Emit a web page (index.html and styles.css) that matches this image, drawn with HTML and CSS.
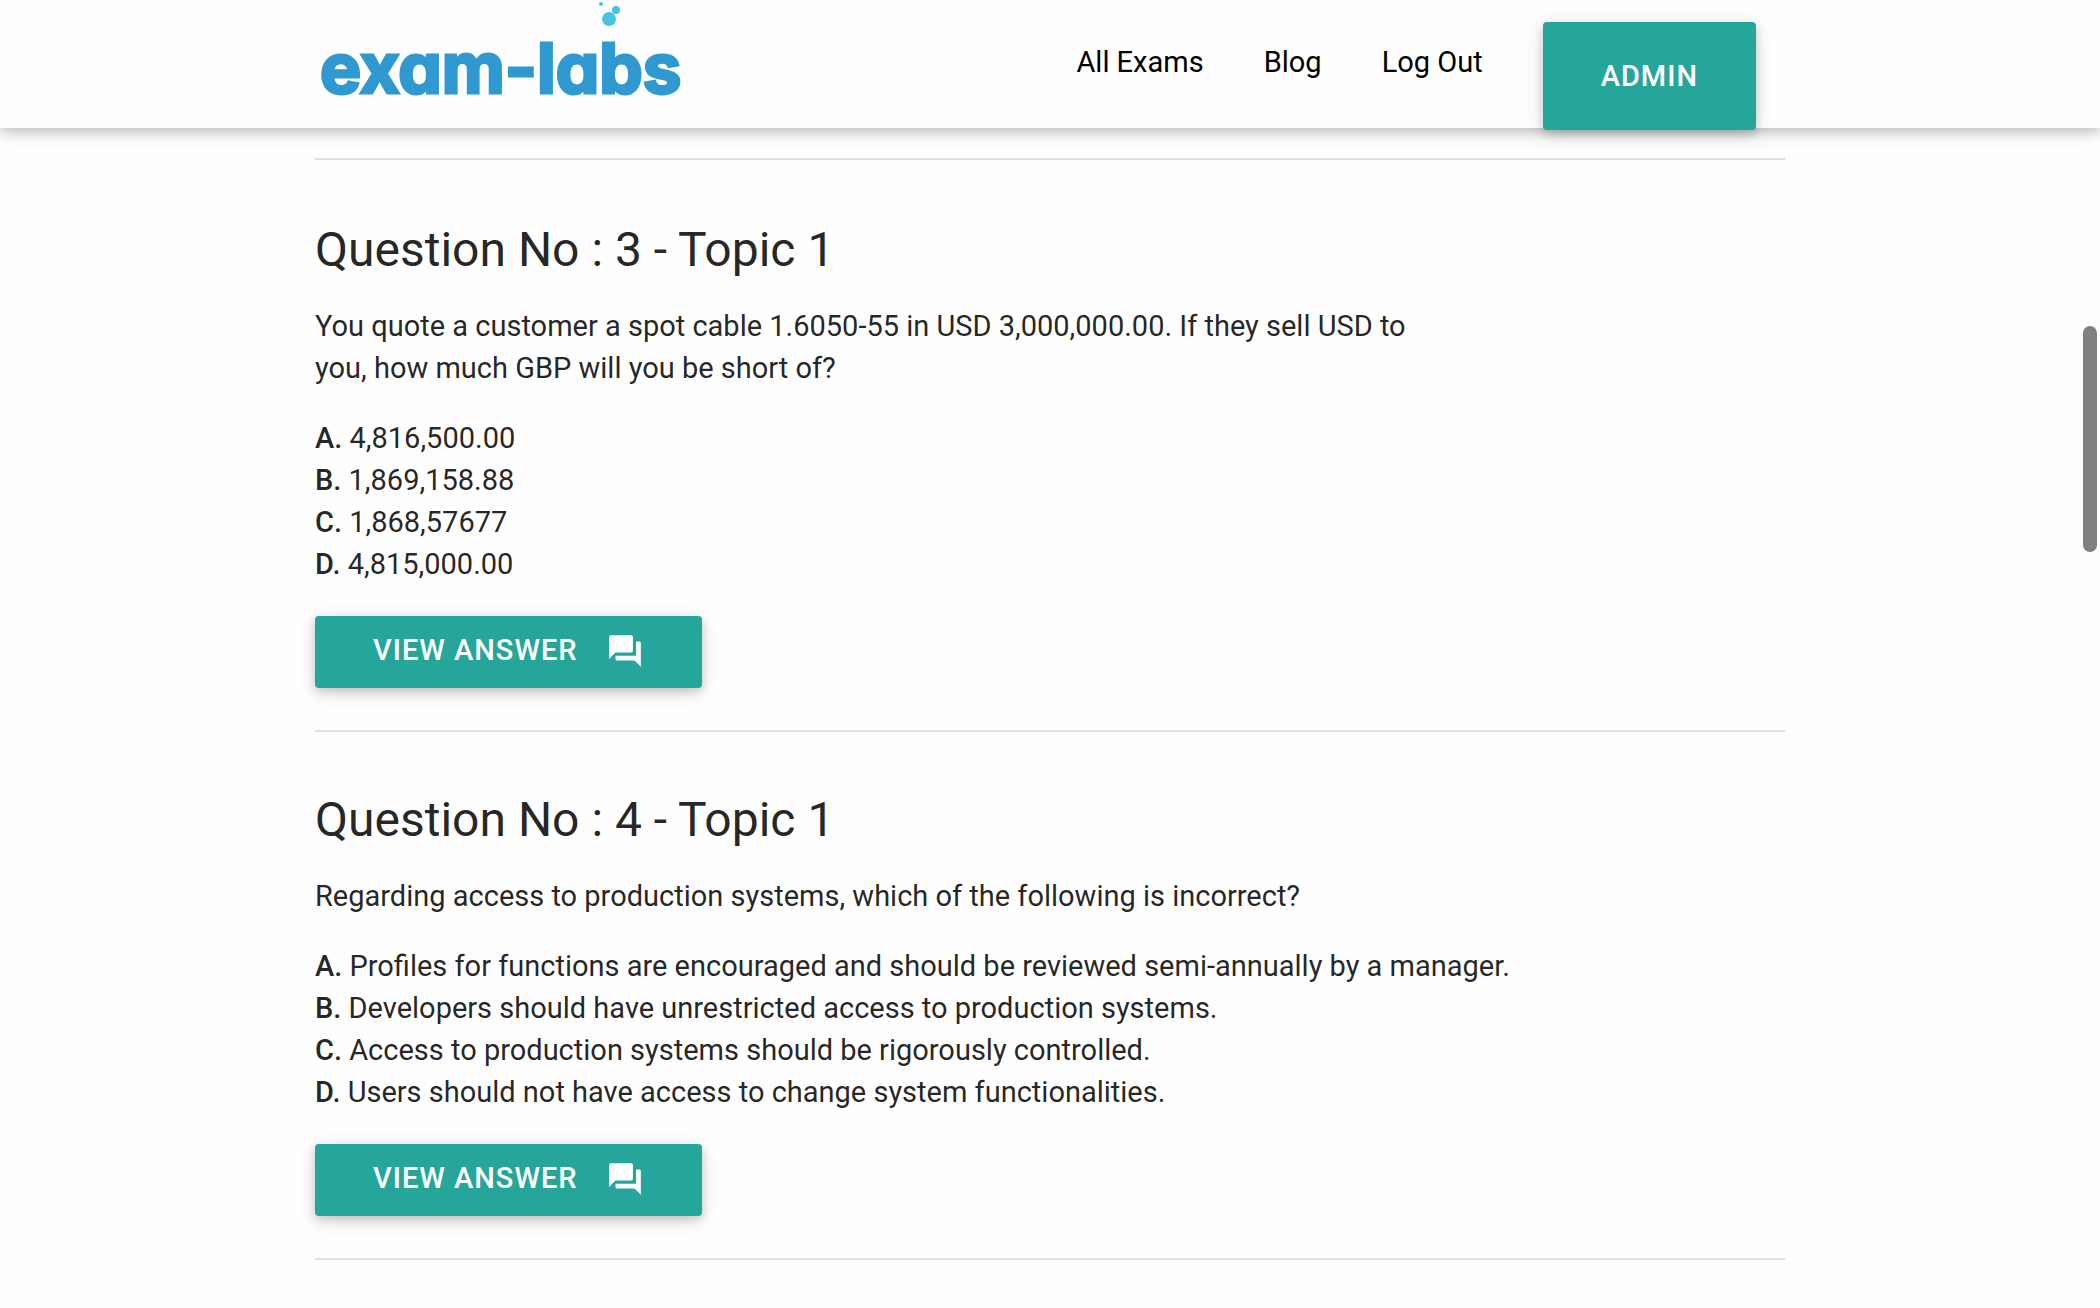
FILE: index.html
```html
<!DOCTYPE html>
<html lang="en">
<head>
  <meta charset="UTF-8">
  <meta name="viewport" content="width=device-width, initial-scale=1.0">
  <title>Exam-Labs</title>
  <link rel="stylesheet" href="styles.css">
</head>
<body>

  <header class="navbar">
    <div class="container nav-wrapper">
      <a href="#" class="brand-logo" aria-label="exam-labs">
        <svg width="380" height="128" viewBox="0 0 380 128">
          <text class="logo-text" x="1" y="93">exam-labs</text>
          <circle cx="290" cy="19" r="7" fill="#45c3e4"/>
          <circle cx="297" cy="10" r="4" fill="#45c3e4"/>
          <circle cx="282" cy="4" r="2" fill="#45c3e4"/>
        </svg>
      </a>
      <nav class="nav-links">
        <a href="#">All Exams</a>
        <a href="#">Blog</a>
        <a href="#">Log Out</a>
        <button type="button" class="btn btn-admin">Admin</button>
      </nav>
    </div>
  </header>

  <main class="container">
    <hr class="divider divider-top">

    <section class="question">
      <h2>Question No : 3 - Topic 1</h2>
      <p>You quote a customer a spot cable 1.6050-55 in USD 3,000,000.00. If they sell USD to<br>you, how much GBP will you be short of?</p>
      <p class="options">
        <strong>A.</strong> 4,816,500.00<br>
        <strong>B.</strong> 1,869,158.88<br>
        <strong>C.</strong> 1,868,57677<br>
        <strong>D.</strong> 4,815,000.00
      </p>
      <button type="button" class="btn">
        View Answer
        <svg class="icon" viewBox="0 0 24 24"><path d="M21 6h-2v9H6v2c0 .55.45 1 1 1h11l4 4V7c0-.55-.45-1-1-1zm-4 6V3c0-.55-.45-1-1-1H3c-.55 0-1 .45-1 1v14l4-4h10c.55 0 1-.45 1-1z"/></svg>
      </button>
    </section>

    <hr class="divider">

    <section class="question">
      <h2>Question No : 4 - Topic 1</h2>
      <p>Regarding access to production systems, which of the following is incorrect?</p>
      <p class="options">
        <strong>A.</strong> Profiles for functions are encouraged and should be reviewed semi-annually by a manager.<br>
        <strong>B.</strong> Developers should have unrestricted access to production systems.<br>
        <strong>C.</strong> Access to production systems should be rigorously controlled.<br>
        <strong>D.</strong> Users should not have access to change system functionalities.
      </p>
      <button type="button" class="btn">
        View Answer
        <svg class="icon" viewBox="0 0 24 24"><path d="M21 6h-2v9H6v2c0 .55.45 1 1 1h11l4 4V7c0-.55-.45-1-1-1zm-4 6V3c0-.55-.45-1-1-1H3c-.55 0-1 .45-1 1v14l4-4h10c.55 0 1-.45 1-1z"/></svg>
      </button>
    </section>

    <hr class="divider">
  </main>

  <div class="scroll-thumb"></div>

</body>
</html>
```
FILE: styles.css
```css
* {
  box-sizing: border-box;
}
html {
  overflow: hidden;
}
body {
  margin: 0;
  font-family: Roboto, sans-serif;
  font-size: 29px;
  line-height: 42px;
  color: rgba(0, 0, 0, 0.87);
  background-color: #fefefe;
}
.container {
  width: 70%;
  margin: 0 auto;
}

/* top bar */
.navbar {
  position: relative;
  height: 128px;
  background-color: #fefefe;
  box-shadow: 0 4px 10px 0 rgba(0, 0, 0, 0.16), 0 4px 20px 0 rgba(0, 0, 0, 0.12);
}
.nav-wrapper {
  display: flex;
  justify-content: space-between;
}
.brand-logo {
  margin-left: 4px;
}
.brand-logo svg {
  display: block;
}
.logo-text {
  font-family: Inter, sans-serif;
  font-size: 69px;
  font-weight: 700;
  font-feature-settings: "cv11";
  fill: #2f99d0;
  stroke: #2f99d0;
  stroke-width: 3px;
}
.nav-links {
  display: flex;
  align-items: flex-start;
  gap: 60px;
  padding-right: 29px;
}
.nav-links a {
  color: #000;
  line-height: 124px;
  text-decoration: none;
}

/* buttons */
.btn {
  display: flex;
  align-items: flex-start;
  height: 72px;
  padding: 0 58px;
  border: none;
  border-radius: 4px;
  background-color: #26a69a;
  box-shadow: 0 4px 10px 0 rgba(0, 0, 0, 0.16), 0 4px 20px 0 rgba(0, 0, 0, 0.12);
  color: #fff;
  font-family: inherit;
  font-size: 29px;
  font-weight: 500;
  letter-spacing: 1px;
  line-height: 68px;
  text-transform: uppercase;
  cursor: pointer;
}
.btn-admin {
  height: 108px;
  margin-top: 22px;
  line-height: 108px;
}
.icon {
  width: 38px;
  height: 38px;
  margin: 16px 0 0 28px;
  fill: #fff;
}

/* questions */
.divider {
  height: 2px;
  margin: 42px 0 62px;
  border: none;
  background-color: #e0e0e0;
}
.divider-top {
  margin: 30px 0 64px;
}
.question h2 {
  margin: 0 0 29px;
  font-size: 48px;
  font-weight: 400;
  line-height: 52px;
}
.question p {
  margin: 0 0 28px;
}
.question .options {
  margin-bottom: 31px;
}
.question strong {
  font-weight: 500;
}

.scroll-thumb {
  position: fixed;
  top: 326px;
  right: 3px;
  width: 14px;
  height: 226px;
  border-radius: 7px;
  background-color: #808080;
}
```
